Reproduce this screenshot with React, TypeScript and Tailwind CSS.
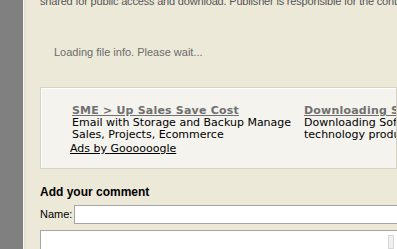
import React from "react";

export default function App() {
  return (
    <div className="w-[397px] h-[249px] overflow-hidden flex bg-[#ece9d8]" style={{ fontFamily: '"Liberation Sans", Arial, sans-serif' }}>
      <div className="w-[23px] shrink-0 bg-[#808080]" />
      <div className="w-px shrink-0 bg-[#f7f6f0]" />
      <div className="w-[2px] shrink-0 bg-[#e4e1d0]" />
      <div className="flex-1 min-w-0 pl-[14px] flex flex-col">
        <div className="mt-[-6px] h-[14px] text-[11px] leading-[14px] tracking-[-0.18px] text-[#555555] whitespace-nowrap">
          shared for public access and download. Publisher is responsible for the content
        </div>
        <div className="mt-[37px] pl-[14px] h-[14px] text-[11px] leading-[14px] text-[#6b6b6b] whitespace-nowrap">
          Loading file info. Please wait...
        </div>
        <div className="mt-[28px] h-[82px] shrink-0 border border-[#d6d2c2] bg-[#f4f3ee] shadow-[inset_1px_1px_0_#ffffff] flex flex-col whitespace-nowrap overflow-hidden" style={{ fontFamily: '"DejaVu Sans", Verdana, sans-serif' }}>
          <div className="flex pl-[31px] pt-[16px]">
            <div className="w-[232px] shrink-0">
              <div className="text-[11px] leading-[13px] font-bold underline tracking-[0.2px] text-[#707070]">SME &gt; Up Sales Save Cost</div>
              <div className="text-[11px] leading-[12px] text-black">Email with Storage and Backup Manage</div>
              <div className="text-[11px] leading-[12px] text-black">Sales, Projects, Ecommerce</div>
            </div>
            <div className="shrink-0">
              <div className="text-[11px] leading-[13px] font-bold underline tracking-[0.2px] text-[#707070]">Downloading Software</div>
              <div className="text-[11px] leading-[12px] text-black">Downloading Software and</div>
              <div className="text-[11px] leading-[12px] text-black">technology products</div>
            </div>
          </div>
          <div className="pl-[29px] mt-[2px] text-[11px] leading-[12px] underline text-black">Ads by Goooooogle</div>
        </div>
        <div className="mt-[16px] h-[14px] text-[12px] leading-[14px] font-bold text-black">Add your comment</div>
        <div className="mt-[6px] flex items-center">
          <span className="text-[11px] text-black w-[34px]">Name:</span>
          <div className="flex-1 h-[19px] bg-white border border-[#a5a5a5] border-r-0" />
        </div>
        <div className="mt-[6px] flex-1 bg-white border border-[#a5a5a5] border-r-0 border-b-0 relative">
          <div className="absolute right-[3px] top-[4px] w-[6px] h-[14px] border border-[#d8d8d8] bg-[#f0f0f0]" />
        </div>
      </div>
    </div>
  );
}
